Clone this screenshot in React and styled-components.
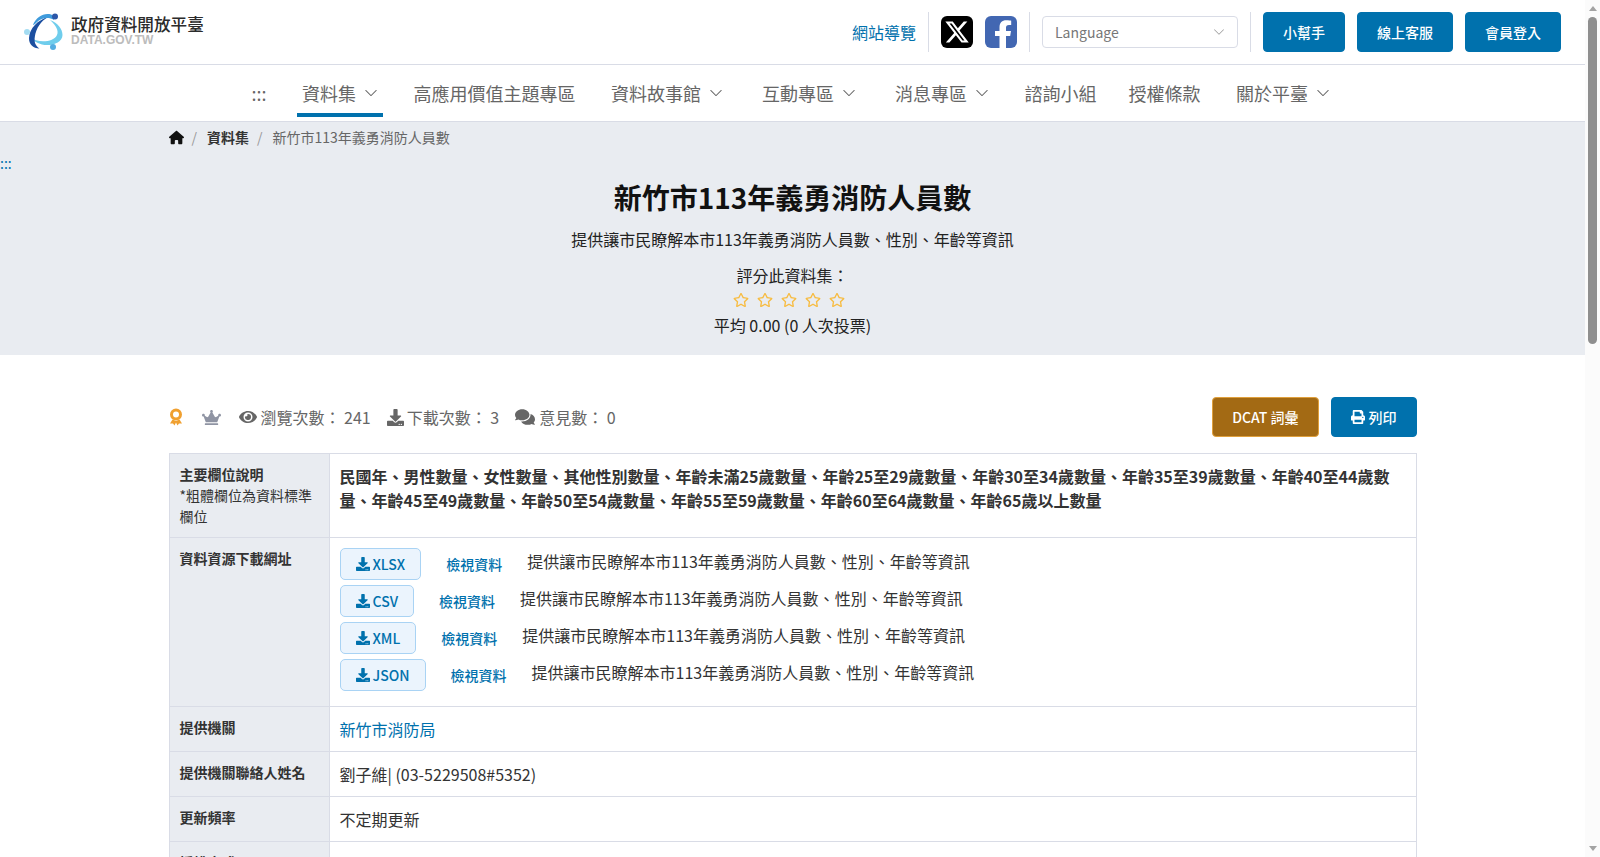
import React from 'react';
import styled, { createGlobalStyle } from 'styled-components';
import { BsChevronDown } from 'react-icons/bs';
import { FaEye, FaDownload, FaComments, FaPrint, FaCrown, FaRegStar } from 'react-icons/fa';
import { FaHouse, FaXTwitter } from 'react-icons/fa6';

const BLUE = '#0071ad';
const LINE = '#d9dce6';
const PALE = '#e9ecf1';

const GlobalStyle = createGlobalStyle`
  html, body { overflow: hidden; }
  body {
    margin: 0;
    background: #fff;
    color: #333;
    font-family: "Noto Sans CJK TC", "Noto Sans", sans-serif;
    font-size: 16px;
    line-height: 1.5;
  }
  a { text-decoration: none; }
`;

const Shell = styled.div`
  display: flex;
  height: 100vh;
`;

const Content = styled.main`
  flex: 1;
  min-width: 0;
  overflow-y: auto;
  scrollbar-width: none;
`;

const Page = styled.div`
  min-height: 2157px;
`;

const ScrollRail = styled.div`
  display: flex;
  flex-direction: column;
  align-items: center;
  flex: none;
  width: 15px;
  padding: 6px 0;
  box-sizing: border-box;
  background: #fbfbfb;
`;

const ScrollArrow = styled.span`
  width: 0;
  height: 0;
  border-left: 4.5px solid transparent;
  border-right: 4.5px solid transparent;
  border-${(p) => (p.$down ? 'top' : 'bottom')}: 5px solid #a3a3a3;
  margin-top: ${(p) => (p.$down ? 'auto' : 0)};
`;

const ScrollThumb = styled.span`
  width: 9px;
  height: 327px;
  margin-top: 6px;
  border-radius: 5px;
  background: #8f8f8f;
`;

const TopBar = styled.header`
  display: flex;
  align-items: center;
  justify-content: space-between;
  height: 64px;
  padding: 0 24px;
  border-bottom: 1px solid ${LINE};
`;

const Brand = styled.a`
  display: flex;
  align-items: center;
  gap: 8px;
`;

const BrandText = styled.div`
  display: flex;
  flex-direction: column;
  padding-bottom: 4px;
`;

const BrandName = styled.span`
  font-size: 16.6px;
  font-weight: 500;
  line-height: 20px;
  color: #2b2b2b;
  white-space: nowrap;
`;

const BrandDomain = styled.span`
  font-family: "Liberation Sans", Arial, sans-serif;
  font-size: 12px;
  font-weight: 700;
  line-height: 13px;
  color: #bcbcbc;
`;

const TopActions = styled.div`
  display: flex;
  align-items: center;
`;

const SiteMapLink = styled.a`
  color: ${BLUE};
  font-size: 16px;
`;

const Divider = styled.span`
  width: 1px;
  height: 40px;
  margin: 0 12px;
  background: ${LINE};
`;

const Socials = styled.div`
  display: flex;
  gap: 12px;
`;

const SocialBox = styled.a`
  display: flex;
  align-items: center;
  justify-content: center;
  width: 32px;
  height: 32px;
  border-radius: 6px;
  background: ${(p) => p.$bg};
  color: #fff;
  overflow: hidden;
`;

const LanguageSelect = styled.div`
  display: flex;
  align-items: center;
  justify-content: space-between;
  box-sizing: border-box;
  width: 196px;
  height: 32px;
  padding: 0 12px;
  border: 1px solid ${LINE};
  border-radius: 4px;
  color: #777;
  font-size: 14px;
`;

const TopButtons = styled.div`
  display: flex;
  gap: 12px;
`;

const SolidButton = styled.a`
  display: inline-flex;
  align-items: center;
  justify-content: center;
  gap: 4px;
  box-sizing: border-box;
  height: 40px;
  padding: 0 19px;
  border: 1px solid ${(p) => p.$border || BLUE};
  border-radius: 4px;
  background: ${(p) => p.$bg || BLUE};
  color: #fff;
  font-size: 14px;
  font-weight: 500;
  white-space: nowrap;
`;

const MainNav = styled.nav`
  display: flex;
  align-items: flex-start;
  justify-content: center;
  gap: 29px;
  height: 57px;
  box-sizing: border-box;
  border-bottom: 1px solid ${LINE};
`;

const NavItem = styled.a`
  display: flex;
  align-items: center;
  gap: 8px;
  box-sizing: border-box;
  height: 52px;
  padding: 8px ${(p) => (p.$drop ? '5px 0 5px' : '1.5px 0')};
  border-bottom: 4px solid ${(p) => (p.$active ? BLUE : 'transparent')};
  color: #666;
  font-size: 18px;
  white-space: nowrap;
`;

const Hero = styled.section`
  background: ${PALE};
  padding-bottom: 18px;
  text-align: center;
`;

const Wrap = styled.div`
  box-sizing: border-box;
  max-width: 1280px;
  margin: 0 auto;
  padding: 0 16px;
`;

const Breadcrumb = styled.div`
  display: flex;
  align-items: center;
  height: 31px;
  color: #666;
  font-size: 14px;
  text-align: left;
`;

const Crumb = styled.a`
  color: ${(p) => (p.$strong ? '#333' : '#666')};
  font-weight: ${(p) => (p.$strong ? 700 : 400)};
  display: inline-flex;
`;

const Slash = styled.span`
  margin: 0 10px 0 8px;
  color: #999;
`;

const AnchorMark = styled.a`
  display: block;
  color: ${BLUE};
  font-size: 14px;
  line-height: 21px;
  text-align: left;
`;

const Title = styled.h1`
  margin: 4px 0 10px;
  color: #111;
  font-size: 28px;
  font-weight: 700;
  line-height: 39px;
`;

const HeroLine = styled.p`
  margin: ${(p) => p.$top || 0}px 0 0;
  color: #222;
  font-size: 16px;
  line-height: 24px;
`;

const Stars = styled.div`
  display: flex;
  justify-content: center;
  align-items: center;
  gap: 8px;
  height: 24px;
  margin-top: 1px;
  padding-right: 8px;
  color: #f7bc42;
`;

const StatBar = styled.div`
  display: flex;
  align-items: center;
  justify-content: space-between;
  margin: 42px 0 16px;
`;

const Stats = styled.div`
  display: flex;
  align-items: center;
  color: #666;
  font-size: 16px;
`;

const Stat = styled.span`
  display: inline-flex;
  align-items: center;
  gap: ${(p) => p.$inner || 4}px;
  margin-right: ${(p) => p.$gap || 0}px;
  color: #666;
  white-space: pre;
`;

const StatActions = styled.div`
  display: flex;
  gap: 12px;
`;

const InfoTable = styled.table`
  width: 100%;
  border-collapse: collapse;
  table-layout: fixed;
  border: 1px solid ${LINE};
`;

const LabelCell = styled.th`
  box-sizing: border-box;
  padding: 10px;
  border: 1px solid ${LINE};
  background: ${PALE};
  color: #333;
  font-size: 14px;
  font-weight: 700;
  line-height: 21px;
  text-align: left;
  vertical-align: top;
`;

const LabelNote = styled.div`
  font-weight: 400;
`;

const ValueCell = styled.td`
  padding: 10px;
  border: 1px solid ${LINE};
  color: #333;
  font-size: 16px;
  font-weight: ${(p) => (p.$bold ? 700 : 400)};
  line-height: 24px;
  vertical-align: top;
`;

const LabelColumn = styled.col`
  width: 160px;
`;

const ResourceRow = styled.div`
  display: flex;
  align-items: flex-start;
  height: 32px;
  margin-bottom: 5px;
`;

const ResourceButton = styled.a`
  display: inline-flex;
  align-items: center;
  gap: 3px;
  box-sizing: border-box;
  height: 32px;
  padding: 0 15px;
  border: 1px solid #a9d3f4;
  border-radius: 5px;
  background: #ebf4fd;
  color: ${BLUE};
  font-size: 14px;
  font-weight: 500;
`;

const ViewLink = styled.a`
  margin: 4px 25px 0 25px;
  color: ${BLUE};
  font-size: 14px;
  font-weight: 500;
  line-height: 24px;
`;

const ResourceText = styled.span`
  line-height: 26px;
`;

const PlainLink = styled.a`
  color: ${BLUE};
`;

const Logo = () => (
  <svg width="39" height="38" viewBox="0 0 39 38" fill="none">
    <path d="M6 24C14 31 30 29 33 22C35 18 32 12 26 7C34 10 38.500 16 38.500 22C38.500 30 27 33.500 18 31.500C12 30 8 27 6 24z" fill="#6fcdec" />
    <path d="M24 4C14 7 5.500 15 5 25C4.800 31 9 35.500 15.500 35.500C11.500 33 10 29 10.800 24C12 15 17 8 24 4z" fill="#1c4fa0" />
    <path d="M9 12C12 4 20 -0.500 27 1.500C29.500 2.500 30 4 30 7C24 3.500 17 5 12 10C10.500 11.500 9.500 12 9 12z" fill="#3f9bdc" />
    <circle cx="31" cy="3.500" r="3" fill="#2c57a8" />
    <circle cx="3" cy="19" r="3" fill="#a4dcf2" />
    <circle cx="29" cy="34" r="3" fill="#54aee2" />
  </svg>
);

const FacebookMark = () => (
  <svg width="32" height="32" viewBox="0 0 32 32">
    <path d="M21 32V20h4.200l.8-5h-5v-3.200c0-1.500.7-2.800 3-2.800h2.200V4.700S23.200 4.300 21.200 4.300c-4.100 0-6.700 2.500-6.700 7V15H10v5h4.500v12z" fill="#fff" />
  </svg>
);

const RibbonIcon = () => (
  <svg width="14" height="18" viewBox="0 0 14 18" fill="none">
    <circle cx="7" cy="6.500" r="4.500" stroke="#f0a030" strokeWidth="3" />
    <path d="M3.500 11.500L1 15.500h3l1.500 2L7 14.500l1.500 3 1.500-2h3l-2.500-4L7 13z" fill="#f0a030" />
  </svg>
);

const resources = [
  { type: 'XLSX' },
  { type: 'CSV' },
  { type: 'XML' },
  { type: 'JSON' },
];

const DESC = '提供讓市民瞭解本市113年義勇消防人員數、性別、年齡等資訊';
const navItems = [
  { label: '資料集', drop: true, active: true },
  { label: '高應用價值主題專區' },
  { label: '資料故事館', drop: true },
  { label: '互動專區', drop: true },
  { label: '消息專區', drop: true },
  { label: '諮詢小組' },
  { label: '授權條款' },
  { label: '關於平臺', drop: true },
];

export default function App() {
  return (
    <Shell>
      <GlobalStyle />
      <Content>
        <Page>
          <TopBar>
            <Brand href="#">
              <Logo />
              <BrandText>
                <BrandName>政府資料開放平臺</BrandName>
                <BrandDomain>DATA.GOV.TW</BrandDomain>
              </BrandText>
            </Brand>
            <TopActions>
              <SiteMapLink href="#">網站導覽</SiteMapLink>
              <Divider />
              <Socials>
                <SocialBox href="#" $bg="#000"><FaXTwitter size={26} /></SocialBox>
                <SocialBox href="#" $bg="#4267b2"><FacebookMark /></SocialBox>
              </Socials>
              <Divider />
              <LanguageSelect>
                Language
                <BsChevronDown size={12} color="#999" />
              </LanguageSelect>
              <Divider />
              <TopButtons>
                <SolidButton href="#">小幫手</SolidButton>
                <SolidButton href="#">線上客服</SolidButton>
                <SolidButton href="#">會員登入</SolidButton>
              </TopButtons>
            </TopActions>
          </TopBar>

          <MainNav>
            <NavItem href="#">:::</NavItem>
            {navItems.map((item) => (
              <NavItem href="#" key={item.label} $drop={item.drop} $active={item.active}>
                {item.label}
                {item.drop && <BsChevronDown size={14} />}
              </NavItem>
            ))}
          </MainNav>

          <Hero>
            <Wrap>
              <Breadcrumb>
                <Crumb href="#" $strong><FaHouse size={15} color="#111" /></Crumb>
                <Slash>/</Slash>
                <Crumb href="#" $strong>資料集</Crumb>
                <Slash>/</Slash>
                <Crumb>新竹市113年義勇消防人員數</Crumb>
              </Breadcrumb>
            </Wrap>
            <AnchorMark href="#">:::</AnchorMark>
            <Wrap>
              <Title>新竹市113年義勇消防人員數</Title>
              <HeroLine>{DESC}</HeroLine>
              <HeroLine $top={12}>評分此資料集：</HeroLine>
              <Stars>
                {[1, 2, 3, 4, 5].map((n) => <FaRegStar key={n} size={16} />)}
              </Stars>
              <HeroLine $top={1}>平均 0.00 (0 人次投票)</HeroLine>
            </Wrap>
          </Hero>

          <Wrap>
            <StatBar>
              <Stats>
                <Stat $gap={19}><RibbonIcon /></Stat>
                <Stat $gap={18}><FaCrown size={19} color="#8f94a3" /></Stat>
                <Stat $gap={16}><FaEye size={18} />瀏覽次數： 241</Stat>
                <Stat $gap={16} $inner={3}><FaDownload size={17} />下載次數： 3</Stat>
                <Stat><FaComments size={20} />意見數： 0</Stat>
              </Stats>
              <StatActions>
                <SolidButton href="#" $bg="#a36a14" $border="#e0a03c">DCAT 詞彙</SolidButton>
                <SolidButton href="#"><FaPrint size={14} />列印</SolidButton>
              </StatActions>
            </StatBar>

            <InfoTable>
              <colgroup>
                <LabelColumn />
                <col />
              </colgroup>
              <tbody>
                <tr>
                  <LabelCell>
                    主要欄位說明
                    <LabelNote>*粗體欄位為資料標準欄位</LabelNote>
                  </LabelCell>
                  <ValueCell $bold>
                    民國年、男性數量、女性數量、其他性別數量、年齡未滿25歲數量、年齡25至29歲數量、年齡30至34歲數量、年齡35至39歲數量、年齡40至44歲數量、年齡45至49歲數量、年齡50至54歲數量、年齡55至59歲數量、年齡60至64歲數量、年齡65歲以上數量
                  </ValueCell>
                </tr>
                <tr>
                  <LabelCell>資料資源下載網址</LabelCell>
                  <ValueCell>
                    {resources.map((r) => (
                      <ResourceRow key={r.type}>
                        <ResourceButton href="#"><FaDownload size={14} />{r.type}</ResourceButton>
                        <ViewLink href="#">檢視資料</ViewLink>
                        <ResourceText>{DESC}</ResourceText>
                      </ResourceRow>
                    ))}
                  </ValueCell>
                </tr>
                <tr>
                  <LabelCell>提供機關</LabelCell>
                  <ValueCell><PlainLink href="#">新竹市消防局</PlainLink></ValueCell>
                </tr>
                <tr>
                  <LabelCell>提供機關聯絡人姓名</LabelCell>
                  <ValueCell>劉子維| (03-5229508#5352)</ValueCell>
                </tr>
                <tr>
                  <LabelCell>更新頻率</LabelCell>
                  <ValueCell>不定期更新</ValueCell>
                </tr>
                <tr>
                  <LabelCell>授權方式</LabelCell>
                  <ValueCell>政府資料開放授權條款-第1版</ValueCell>
                </tr>
              </tbody>
            </InfoTable>
          </Wrap>
        </Page>
      </Content>
      <ScrollRail>
        <ScrollArrow />
        <ScrollThumb />
        <ScrollArrow $down />
      </ScrollRail>
    </Shell>
  );
}
